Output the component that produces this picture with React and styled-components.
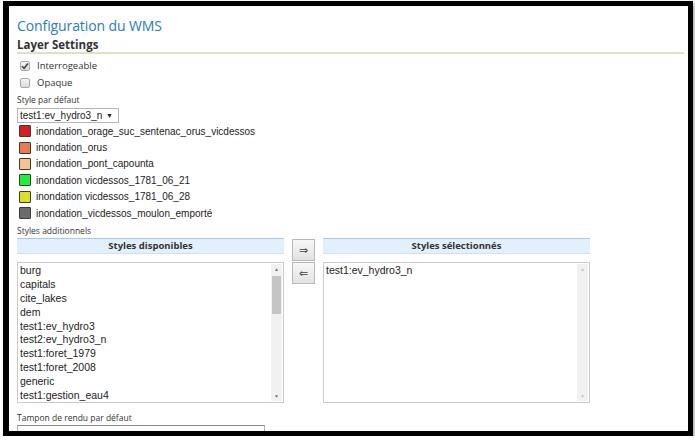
import React from 'react'
import styled, { createGlobalStyle } from 'styled-components'

const GlobalStyle = createGlobalStyle`
  body {
    margin: 0;
    background: #fff;
    font-family: "Liberation Sans", Arial, sans-serif;
  }
`

const Frame = styled.div`
  box-sizing: border-box;
  margin: 1px 0 0 3px;
  width: 690px;
  height: 435px;
  border: 5px solid #000;
  border-left-width: 6px;
  box-shadow: 2px 3px 4px rgba(0, 0, 0, 0.35);
  overflow: hidden;
  background: #fff;
`

const Content = styled.div`
  padding: 10px 4px 0 8px;
  display: flex;
  flex-direction: column;
`

const Title = styled.h1`
  margin: 0;
  font-family: "Open Sans", sans-serif;
  font-weight: 400;
  font-size: 14px;
  letter-spacing: -0.1px;
  line-height: 20px;
  color: #2a7cc0;
`

const SectionTitle = styled.h2`
  margin: 2px 0 0;
  font-family: "Open Sans", sans-serif;
  font-weight: 700;
  font-size: 11.5px;
  line-height: 14px;
  color: #333;
  border-bottom: 2px solid #d7e5c6;
`

const CheckRow = styled.label`
  display: flex;
  align-items: center;
  gap: 7px;
  height: 17px;
  padding-left: 3px;
  margin-top: ${p => (p.first ? '3px' : '0')};
  font-family: "Open Sans", sans-serif;
  font-size: 9.5px;
  color: #333;
`

const Box = styled.span`
  box-sizing: border-box;
  width: 10px;
  height: 10px;
  border: 1px solid #a8a8a8;
  border-radius: 2px;
  background: linear-gradient(#f4f4f4, #dcdcdc);
  display: flex;
  align-items: center;
  justify-content: center;
`

const SmallLabel = styled.div`
  margin-top: ${p => p.mt || 0}px;
  font-family: "Open Sans", sans-serif;
  font-size: 8.5px;
  line-height: 13px;
  color: #333;
`

const Select = styled.div`
  box-sizing: border-box;
  margin-top: 2px;
  width: 102px;
  height: 15px;
  border: 1px solid #b5b5b5;
  display: flex;
  align-items: center;
  justify-content: space-between;
  padding: 0 5px 0 2px;
  font-size: 10px;
  color: #222;
  & span {
    font-size: 7px;
  }
`

const LegendRow = styled.div`
  display: flex;
  align-items: center;
  gap: 5px;
  height: 16.4px;
  padding-left: 2px;
  font-size: 10px;
  color: #222;
`

const Swatch = styled.span`
  box-sizing: border-box;
  width: 12px;
  height: 12px;
  border: 1px solid #3a3a3a;
  border-radius: 1px;
  background: ${p => p.color};
`

const Transfer = styled.div`
  margin-top: 1px;
  display: grid;
  grid-template-columns: 267px 23px 267px;
  column-gap: 8px;
  align-items: start;
`

const Column = styled.div`
  display: flex;
  flex-direction: column;
  gap: 8px;
`

const PanelHeader = styled.div`
  box-sizing: border-box;
  height: 16px;
  background: #e2effc;
  border-top: 1px solid #a9c8e6;
  border-bottom: 1px solid #cfe0f1;
  text-align: center;
  font-family: "Open Sans", sans-serif;
  font-weight: 700;
  font-size: 9.5px;
  line-height: 14px;
  color: #333;
`

const ListBox = styled.div`
  box-sizing: border-box;
  height: 141px;
  border: 1px solid #cacaca;
  display: flex;
`

const Items = styled.div`
  flex: 1;
  padding: 1px 0 0 2px;
  font-size: 10.5px;
  line-height: 13.8px;
  color: #222;
`

const ScrollBar = styled.div`
  width: 11px;
  margin: 1px 1px 1px 0;
  background: #f1f1f1;
  display: flex;
  flex-direction: column;
  align-items: center;
`

const Arrow = styled.div`
  height: 10px;
  font-size: 5px;
  line-height: 10px;
  color: ${p => (p.active ? '#777' : '#c4c4c4')};
`

const Thumb = styled.div`
  width: 9px;
  height: 38px;
  margin-top: 2px;
  background: #c5c5c5;
`

const Spacer = styled.div`
  flex: 1;
`

const Buttons = styled.div`
  margin-top: 1px;
  display: flex;
  flex-direction: column;
  gap: 1px;
`

const MoveButton = styled.button`
  box-sizing: border-box;
  width: 23px;
  height: 22px;
  padding: 0;
  border: 1px solid #b9b9b9;
  background: linear-gradient(#f7f7f7, #e2e2e2);
  font-family: "DejaVu Sans", sans-serif;
  font-size: 11px;
  color: #444;
`

const BufferInput = styled.div`
  box-sizing: border-box;
  margin-top: 1px;
  width: 248px;
  height: 14px;
  border: 1px solid #b0b0b0;
  border-top-color: #888;
`

const legend = [
  ['#d42222', 'inondation_orage_suc_sentenac_orus_vicdessos'],
  ['#e87a4c', 'inondation_orus'],
  ['#f7c48e', 'inondation_pont_capounta'],
  ['#22ee3a', 'inondation vicdessos_1781_06_21'],
  ['#dede22', 'inondation vicdessos_1781_06_28'],
  ['#6b6b6b', 'inondation_vicdessos_moulon_emporté'],
]

const available = [
  'burg',
  'capitals',
  'cite_lakes',
  'dem',
  'test1:ev_hydro3',
  'test2:ev_hydro3_n',
  'test1:foret_1979',
  'test1:foret_2008',
  'generic',
  'test1:gestion_eau4',
]

function Check() {
  return (
    <svg width="8" height="8" viewBox="0 0 8 8">
      <path d="M1 4.2 L3.1 6.3 L7 1.5" fill="none" stroke="#444" strokeWidth="1.6" />
    </svg>
  )
}

function App() {
  return (
    <>
      <GlobalStyle />
      <Frame>
        <Content>
          <Title>Configuration du WMS</Title>
          <SectionTitle>Layer Settings</SectionTitle>
          <CheckRow first>
            <Box><Check /></Box>
            Interrogeable
          </CheckRow>
          <CheckRow>
            <Box />
            Opaque
          </CheckRow>
          <SmallLabel mt={2}>Style par défaut</SmallLabel>
          <Select>
            test1:ev_hydro3_n <span>▼</span>
          </Select>
          {legend.map(([color, name]) => (
            <LegendRow key={name}>
              <Swatch color={color} />
              {name}
            </LegendRow>
          ))}
          <SmallLabel mt={3}>Styles additionnels</SmallLabel>
          <Transfer>
            <Column>
              <PanelHeader>Styles disponibles</PanelHeader>
              <ListBox>
                <Items>
                  {available.map(s => (
                    <div key={s}>{s}</div>
                  ))}
                </Items>
                <ScrollBar>
                  <Arrow active>▲</Arrow>
                  <Thumb />
                  <Spacer />
                  <Arrow active>▼</Arrow>
                </ScrollBar>
              </ListBox>
            </Column>
            <Buttons>
              <MoveButton>⇒</MoveButton>
              <MoveButton>⇐</MoveButton>
            </Buttons>
            <Column>
              <PanelHeader>Styles sélectionnés</PanelHeader>
              <ListBox>
                <Items>
                  <div>test1:ev_hydro3_n</div>
                </Items>
                <ScrollBar>
                  <Arrow>▲</Arrow>
                  <Spacer />
                  <Arrow>▼</Arrow>
                </ScrollBar>
              </ListBox>
            </Column>
          </Transfer>
          <SmallLabel mt={8}>Tampon de rendu par défaut</SmallLabel>
          <BufferInput />
        </Content>
      </Frame>
    </>
  )
}

export default App
